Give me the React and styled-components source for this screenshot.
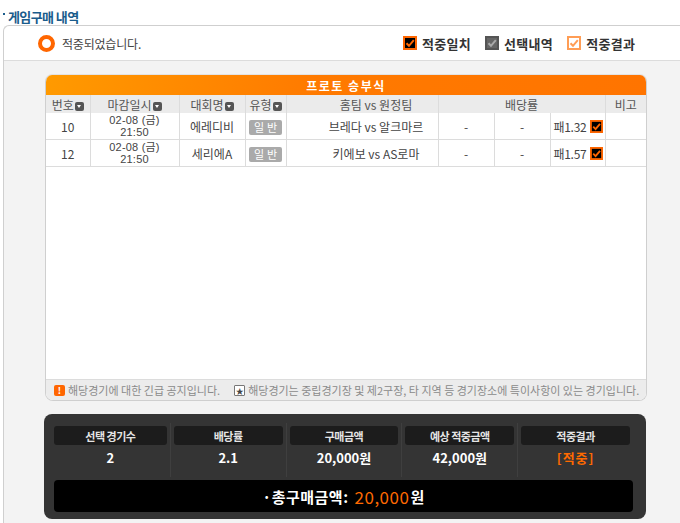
import React from 'react';
import styled, { createGlobalStyle } from 'styled-components';

const GlobalStyle = createGlobalStyle`
  html, body {
    margin: 0;
    padding: 0;
    background: #fff;
    overflow: hidden;
  }
  body {
    font-family: 'Noto Sans CJK KR', 'Noto Sans', sans-serif;
  }
`;

const Page = styled.div`
  width: 680px;
  height: 523px;
  padding: 7px 0 0 3px;
  box-sizing: border-box;
  overflow: hidden;
`;

const Title = styled.h2`
  display: flex;
  align-items: center;
  gap: 3px;
  margin: 0;
  height: 18px;
  font-size: 13px;
  font-weight: 700;
  color: #1a5c8c;
  letter-spacing: -0.6px;

  &:before {
    content: '';
    width: 2px;
    height: 2px;
    margin-top: -4px;
    background: #1a5c8c;
  }
`;

const Panel = styled.section`
  width: 720px;
  height: 520px;
  border: 1px solid #cfcfcf;
  border-right: 0;
  border-radius: 6px 0 0 0;
  background: #f3f3f3;
`;

const PanelHead = styled.div`
  display: flex;
  align-items: center;
  height: 34px;
  padding: 0 0 0 34px;
  background: #fff;
  border-radius: 6px 0 0 0;
  border-bottom: 1px solid #dcdcdc;
`;

const Status = styled.div`
  display: flex;
  align-items: center;
  gap: 7px;
  font-size: 12px;
  color: #444;
  letter-spacing: -0.2px;
`;

const Ring = styled.span`
  width: 9px;
  height: 9px;
  border-radius: 50%;
  border: 4px solid #ff6600;
  background: #fff;
`;

const Legend = styled.div`
  display: flex;
  align-items: center;
  gap: 14px;
  margin-left: 262px;
`;

const LegendItem = styled.span`
  display: flex;
  align-items: center;
  gap: 5px;
  font-size: 13px;
  font-weight: 700;
  color: #333;
  letter-spacing: 0.3px;
`;

const PanelBody = styled.div`
  padding: 14px 0 0 41px;
`;

const GridBox = styled.div`
  width: 600px;
  height: 325px;
  display: flex;
  flex-direction: column;
  background: #fff;
  border: 1px solid #cfcfcf;
  border-top: 0;
  border-radius: 7px 7px 8px 8px;
  box-shadow: 0 -1px 0 #e3e3e3;
  overflow: hidden;
`;

const GridTitle = styled.div`
  height: 20px;
  display: flex;
  align-items: center;
  justify-content: center;
  background: linear-gradient(100deg, #ff9a00 0%, #ff7a00 45%, #ff7400 100%);
  color: #fff;
  font-size: 12px;
  font-weight: 700;
  letter-spacing: 1.5px;
`;

const Table = styled.table`
  width: 100%;
  border-collapse: collapse;
  table-layout: fixed;
  font-size: 12px;
  color: #444;

  th {
    height: 18px;
    padding: 0;
    background: #ebebeb;
    font-weight: 400;
    color: #555;
    border-left: 1px solid #dcdcdc;
    white-space: nowrap;
  }
  td {
    height: 26px;
    padding: 0;
    text-align: center;
    border-left: 1px solid #dcdcdc;
    border-bottom: 1px solid #dcdcdc;
    white-space: nowrap;
  }
  th:first-child, td:first-child {
    border-left: 0;
  }
  th.match, td.match {
    padding-left: 28px;
  }
`;

const DateCell = styled.div`
  font-family: 'Liberation Sans', 'Noto Sans CJK KR', sans-serif;
  font-size: 11px;
  line-height: 12px;
  letter-spacing: 0.2px;
`;

const SortMark = styled.span`
  display: inline-block;
  vertical-align: -1px;
  width: 9px;
  height: 9px;
  margin-left: 1px;
  border-radius: 2px;
  background: #555;
  position: relative;

  &:after {
    content: '';
    position: absolute;
    left: 2px;
    top: 3px;
    border-left: 2.5px solid transparent;
    border-right: 2.5px solid transparent;
    border-top: 3px solid #fff;
  }
`;

const Badge = styled.span`
  display: inline-block;
  width: 33px;
  height: 15px;
  line-height: 15px;
  border-radius: 2px;
  background: #aaa;
  color: #fff;
  font-size: 11px;
  letter-spacing: 3px;
  text-indent: 3px;
`;

const Odds = styled.div`
  display: flex;
  align-items: center;
  justify-content: flex-start;
  gap: 4px;
  padding-left: 3px;
  letter-spacing: -0.3px;
`;

const Spacer = styled.div`
  flex: 1;
  border-bottom: 1px solid #dcdcdc;
`;

const Notice = styled.div`
  height: 20px;
  display: flex;
  align-items: center;
  gap: 14px;
  padding-left: 8px;
  background: #ececec;
  font-size: 11px;
  color: #8a8a8a;
`;

const NoticeItem = styled.span`
  display: flex;
  align-items: center;
  gap: 3px;
`;

const Bang = styled.span`
  width: 11px;
  height: 11px;
  border-radius: 2px;
  background: #ff6600;
  color: #fff;
  font-size: 9px;
  font-weight: 700;
  line-height: 11px;
  text-align: center;
`;

const Star = styled.span`
  width: 9px;
  height: 9px;
  border: 1px solid #777;
  border-radius: 1px;
  background: #fff;
  color: #444;
  font-size: 8px;
  line-height: 9px;
  text-align: center;
`;

const Summary = styled.div`
  width: 602px;
  margin: 13px 0 0 -1px;
  padding: 9px 13px 7px 10px;
  box-sizing: border-box;
  background: #343434;
  border-radius: 8px;
`;

const Stats = styled.div`
  display: grid;
  grid-template-columns: repeat(5, 1fr);
`;

const Stat = styled.div`
  display: flex;
  flex-direction: column;
  align-items: stretch;
  padding: 3px 3px 0;
  height: 51px;
  border-left: ${({ $first }) => ($first ? '0' : '1px solid #3f3f3f')};
  &:first-child {
    padding-left: 0;
  }
`;

const StatLabel = styled.div`
  height: 19px;
  display: flex;
  align-items: center;
  justify-content: center;
  border-radius: 3px;
  background: #1c1c1c;
  color: #e4e4e4;
  font-size: 11px;
  font-weight: 700;
  letter-spacing: -0.5px;
`;

const StatValue = styled.div`
  flex: 1;
  display: flex;
  align-items: center;
  justify-content: center;
  padding-bottom: 8px;
  color: ${({ $hit }) => ($hit ? '#ff6a00' : '#fff')};
  font-size: 13px;
  font-weight: 700;
  letter-spacing: ${({ $hit }) => ($hit ? '1px' : '0')};
`;

const Total = styled.div`
  height: 32px;
  margin-top: 3px;
  display: flex;
  align-items: center;
  justify-content: center;
  background: #000;
  border-radius: 4px;
  color: #fff;
  font-size: 15px;
  font-weight: 700;
  letter-spacing: 0.5px;

  em {
    font-style: normal;
    font-weight: 400;
    font-size: 17px;
    color: #ff6a00;
    margin: 0 1px 0 6px;
  }
`;

const Check = ({ variant = 'hit', size = 14 }) => {
  const styles = {
    hit: { border: '#ff6600', fill: '#000', mark: '#ff6600' },
    pick: { border: '#555', fill: '#666', mark: '#aaa' },
    result: { border: '#ff9d55', fill: '#fff', mark: '#ff9d55' },
  }[variant];
  return (
    <svg width={size} height={size} viewBox="0 0 14 14" style={{ flex: 'none' }}>
      <rect x="1" y="1" width="12" height="12" fill={styles.fill} stroke={styles.border} strokeWidth="2" />
      <path d="M3.5 7.2 L6 9.8 L10.8 4.2" fill="none" stroke={styles.mark} strokeWidth="2" />
    </svg>
  );
};

const rows = [
  { no: 10, league: '에레디비', match: '브레다 vs 알크마르', odds: '패1.32' },
  { no: 12, league: '세리에A', match: '키에보 vs AS로마', odds: '패1.57' },
];

const stats = [
  { label: '선택 경기수', value: '2' },
  { label: '배당률', value: '2.1' },
  { label: '구매금액', value: '20,000원' },
  { label: '예상 적중금액', value: '42,000원' },
  { label: '적중결과', value: '[적중]', hit: true },
];

const App = () => (
  <Page>
    <GlobalStyle />
    <Title>게임구매 내역</Title>
    <Panel>
      <PanelHead>
        <Status>
          <Ring />
          적중되었습니다.
        </Status>
        <Legend>
          <LegendItem>
            <Check variant="hit" />
            적중일치
          </LegendItem>
          <LegendItem>
            <Check variant="pick" />
            선택내역
          </LegendItem>
          <LegendItem>
            <Check variant="result" />
            적중결과
          </LegendItem>
        </Legend>
      </PanelHead>

      <PanelBody>
        <GridBox>
          <GridTitle>프로토 승부식</GridTitle>
          <Table>
            <colgroup>
              <col style={{ width: 44 }} />
              <col style={{ width: 89 }} />
              <col style={{ width: 66 }} />
              <col style={{ width: 41 }} />
              <col style={{ width: 152 }} />
              <col style={{ width: 56 }} />
              <col style={{ width: 56 }} />
              <col style={{ width: 55 }} />
              <col />
            </colgroup>
            <thead>
              <tr>
                <th>번호<SortMark /></th>
                <th>마감일시<SortMark /></th>
                <th>대회명<SortMark /></th>
                <th>유형<SortMark /></th>
                <th className="match">홈팀 vs 원정팀</th>
                <th colSpan={3}>배당률</th>
                <th>비고</th>
              </tr>
            </thead>
            <tbody>
              {rows.map((r) => (
                <tr key={r.no}>
                  <td>{r.no}</td>
                  <td>
                    <DateCell>02-08 (금)</DateCell>
                    <DateCell>21:50</DateCell>
                  </td>
                  <td>{r.league}</td>
                  <td>
                    <Badge>일반</Badge>
                  </td>
                  <td className="match">{r.match}</td>
                  <td>-</td>
                  <td>-</td>
                  <td>
                    <Odds>
                      {r.odds}
                      <Check variant="hit" size={13} />
                    </Odds>
                  </td>
                  <td />
                </tr>
              ))}
            </tbody>
          </Table>
          <Spacer />
          <Notice>
            <NoticeItem>
              <Bang>!</Bang>
              해당경기에 대한 긴급 공지입니다.
            </NoticeItem>
            <NoticeItem>
              <Star>★</Star>
              해당경기는 중립경기장 및 제2구장, 타 지역 등 경기장소에 특이사항이 있는 경기입니다.
            </NoticeItem>
          </Notice>
        </GridBox>

        <Summary>
          <Stats>
            {stats.map((s, i) => (
              <Stat key={s.label} $first={i === 0}>
                <StatLabel>{s.label}</StatLabel>
                <StatValue $hit={s.hit}>{s.value}</StatValue>
              </Stat>
            ))}
          </Stats>
          <Total>
            ·총구매금액:<em>20,000</em>원
          </Total>
        </Summary>
      </PanelBody>
    </Panel>
  </Page>
);

export default App;
